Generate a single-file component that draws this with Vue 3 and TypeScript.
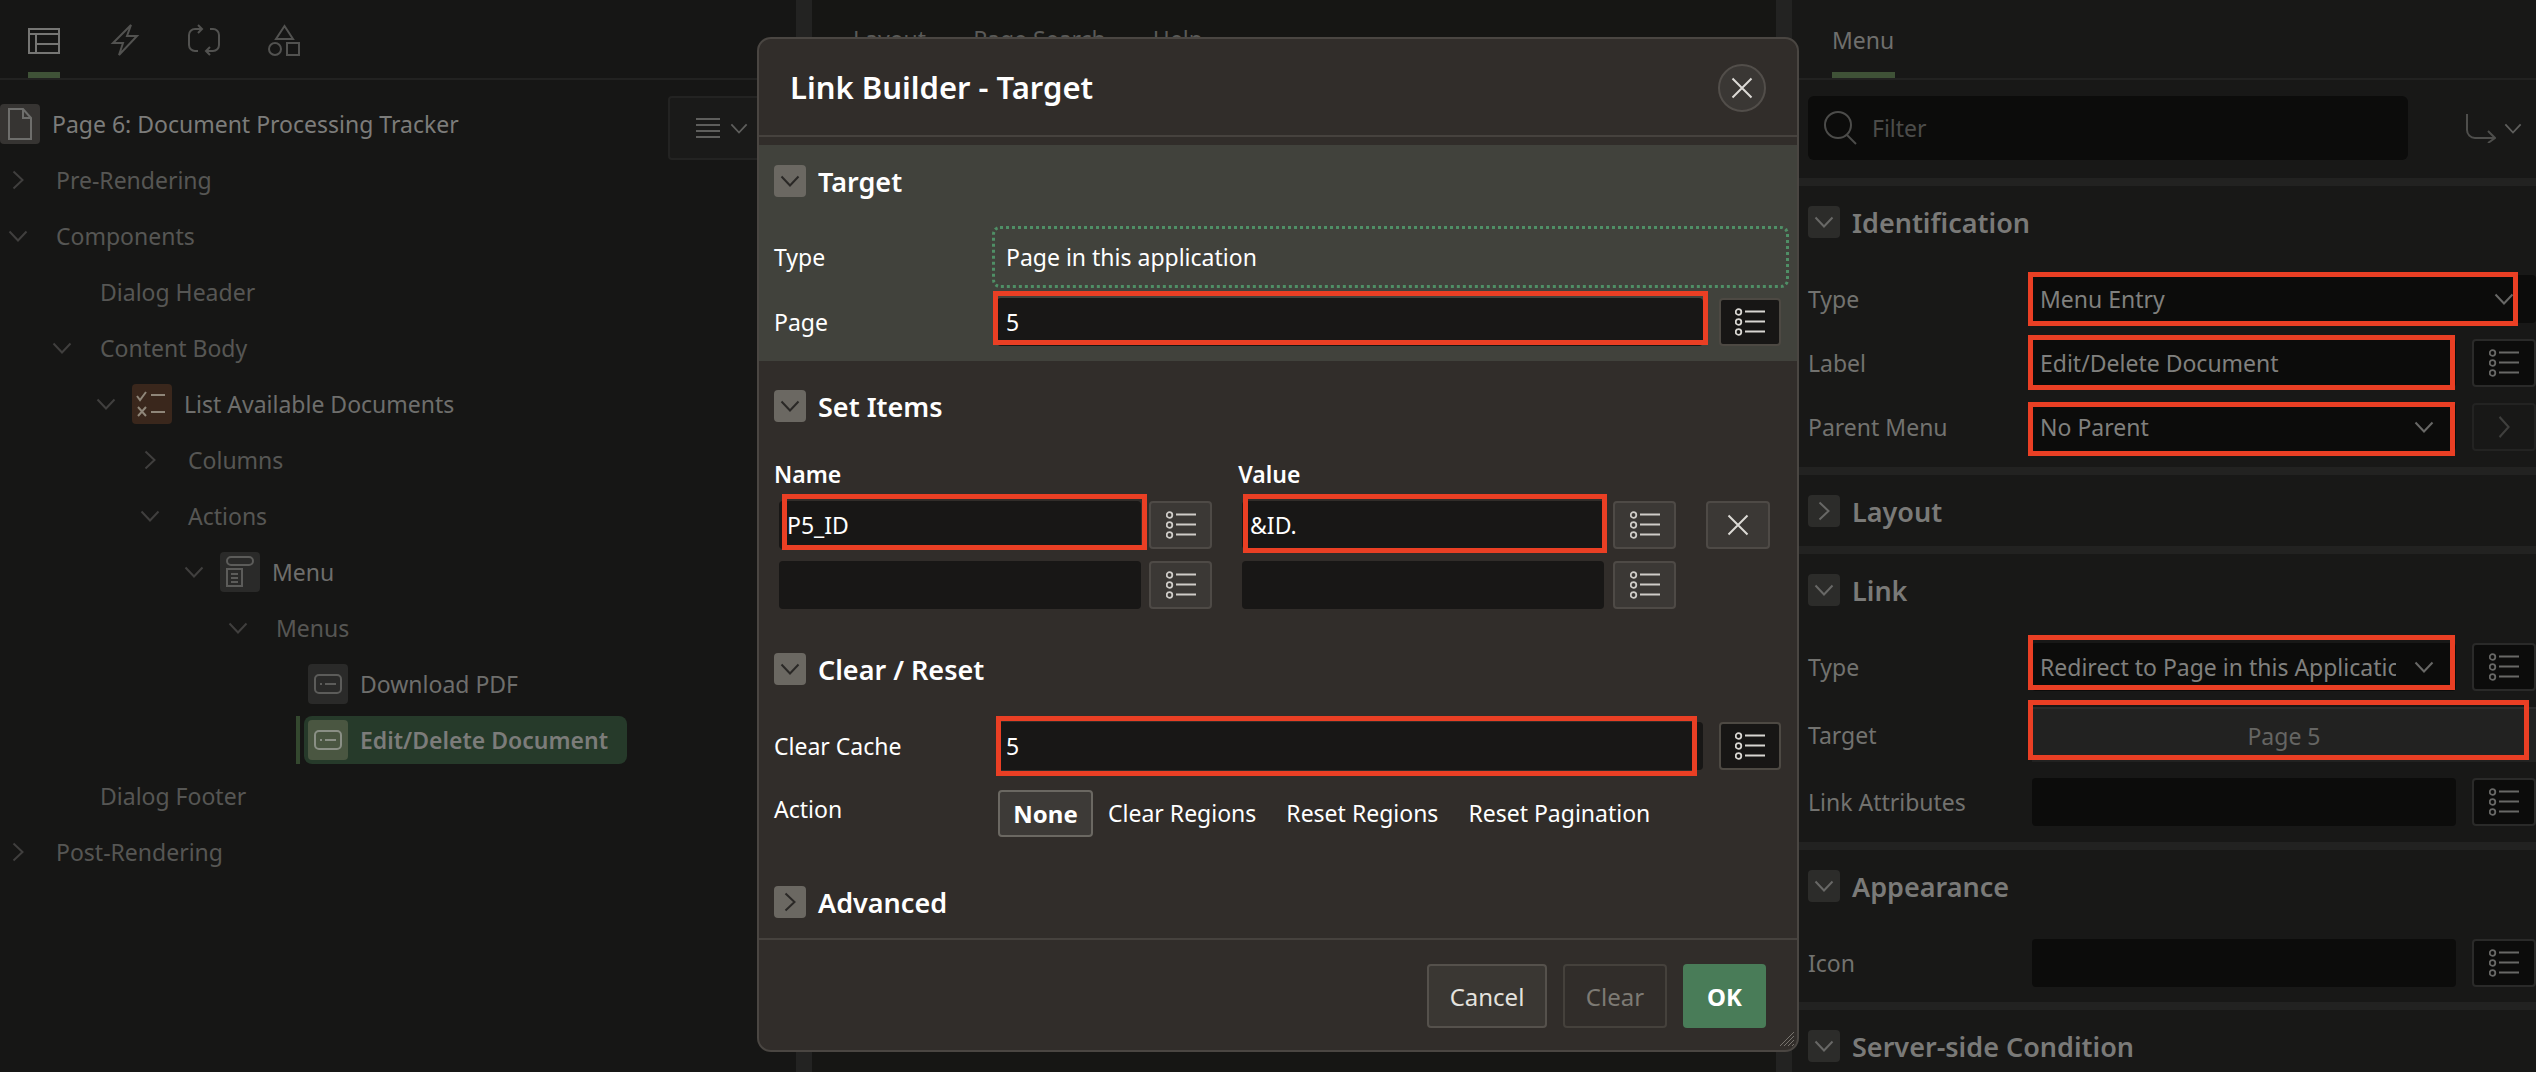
<script setup lang="ts">
interface TreeNode {
    label: string
    depth: number
    chev?: 'down' | 'right'
    icon?: 'list' | 'menu' | 'entry'
    selected?: boolean
}

const tree: TreeNode[] = [
    { label: 'Pre-Rendering', depth: 0, chev: 'right' },
    { label: 'Components', depth: 0, chev: 'down' },
    { label: 'Dialog Header', depth: 1 },
    { label: 'Content Body', depth: 1, chev: 'down' },
    { label: 'List Available Documents', depth: 2, chev: 'down', icon: 'list' },
    { label: 'Columns', depth: 3, chev: 'right' },
    { label: 'Actions', depth: 3, chev: 'down' },
    { label: 'Menu', depth: 4, chev: 'down', icon: 'menu' },
    { label: 'Menus', depth: 5, chev: 'down' },
    { label: 'Download PDF', depth: 6, icon: 'entry' },
    { label: 'Edit/Delete Document', depth: 6, icon: 'entry', selected: true },
    { label: 'Dialog Footer', depth: 1 },
    { label: 'Post-Rendering', depth: 0, chev: 'right' },
]

const actions = ['Clear Regions', 'Reset Regions', 'Reset Pagination']
</script>

<template>
    <div class="page">
        <svg class="sprite" aria-hidden="true">
            <symbol id="chev-d" viewBox="0 0 20 12"><path d="M1.5 1.5 10 10.5l8.5-9" fill="none" stroke="currentColor" stroke-width="2" /></symbol>
            <symbol id="chev-r" viewBox="0 0 12 20"><path d="M1.5 1.5 10.5 10l-9 8.5" fill="none" stroke="currentColor" stroke-width="2" /></symbol>
            <symbol id="lov" viewBox="0 0 30 28">
                <g fill="none" stroke="currentColor" stroke-width="1.800">
                    <circle cx="3.500" cy="4" r="2.800" /><circle cx="3.500" cy="14" r="2.800" /><circle cx="3.500" cy="24" r="2.800" />
                    <path d="M10 3.500h20M10 13.500h20M10 23.500h20" />
                </g>
            </symbol>
            <symbol id="cross" viewBox="0 0 22 22"><path d="M1.500 1.500l19 19m0-19l-19 19" fill="none" stroke="currentColor" stroke-width="2" /></symbol>
        </svg>

        <aside class="left">
            <div class="tabs">
                <div class="tab tab-on">
                    <svg width="32" height="32" viewBox="0 0 32 32" fill="none" stroke="currentColor" stroke-width="2"><path d="M1 5h30v24H1zM1 10h30M8 10v19M8 20h23" /></svg>
                </div>
                <div class="tab">
                    <svg width="32" height="32" viewBox="0 0 32 32" fill="none" stroke="currentColor" stroke-width="2"><path d="M23 1 5 19h10l-4 12 18-19H19z" /></svg>
                </div>
                <div class="tab">
                    <svg width="32" height="32" viewBox="0 0 32 32" fill="none" stroke="currentColor" stroke-width="2"><path d="M13 5H7a6 6 0 0 0-6 6v10a6 6 0 0 0 6 6h3M10 1l4 4-4 4M19 27h6a6 6 0 0 0 6-6V11a6 6 0 0 0-6-6h-3M22 23l-4 4 4 4" /></svg>
                </div>
                <div class="tab">
                    <svg width="32" height="32" viewBox="0 0 32 32" fill="none" stroke="currentColor" stroke-width="2"><path d="M16.500 2 25 15H8zM19 19h12v12H19z" /><circle cx="7" cy="25" r="6" /></svg>
                </div>
            </div>

            <div class="tree">
                <div class="root-row">
                    <span class="node-icon page-icon">
                        <svg width="26" height="32" viewBox="0 0 26 32" fill="none" stroke="currentColor" stroke-width="2"><path d="M2 1h14l8 9v21H2zM16 1v9h8" /></svg>
                    </span>
                    <span class="root-label">Page 6: Document Processing Tracker</span>
                    <div class="tree-menu">
                        <svg width="24" height="20" viewBox="0 0 24 20" fill="none" stroke="currentColor" stroke-width="2"><path d="M0 1h24M0 7h24M0 13h24M0 19h24" /></svg>
                        <svg class="tree-menu-chev" width="18" height="11"><use href="#chev-d" /></svg>
                    </div>
                </div>

                <div
                    v-for="n in tree"
                    :key="n.label"
                    class="row"
                    :class="{ 'row-sel': n.selected }"
                    :style="{ paddingLeft: n.depth * 44 + 'px' }"
                >
                    <span class="chev-cell">
                        <svg v-if="n.chev === 'down'" width="20" height="12"><use href="#chev-d" /></svg>
                        <svg v-else-if="n.chev === 'right'" class="chev-r" width="12" height="20"><use href="#chev-r" /></svg>
                    </span>
                    <span v-if="n.selected" class="sel-bar"></span>
                    <span v-if="n.icon" class="node-icon" :class="'icon-' + n.icon">
                        <svg v-if="n.icon === 'list'" width="32" height="32" viewBox="0 0 32 32" fill="none" stroke="currentColor" stroke-width="2">
                            <path d="M1 8l3 4 6-8M15 7h14M2 19l8 9m0-9-8 9M15 24h14" />
                        </svg>
                        <svg v-else-if="n.icon === 'menu'" width="28" height="32" viewBox="0 0 28 32" fill="none" stroke="currentColor" stroke-width="2">
                            <rect x="1" y="1" width="26" height="8" rx="4" /><path d="M1 13h15v17H1zM5 18h7M5 22h7M5 26h7" />
                        </svg>
                        <svg v-else width="28" height="20" viewBox="0 0 28 20" fill="none" stroke="currentColor" stroke-width="2">
                            <rect x="1" y="1" width="26" height="18" rx="4" /><path d="M6 10h2M11 10h11" />
                        </svg>
                    </span>
                    <span class="row-label" :class="{ 'label-bright': n.icon === 'list' || n.icon === 'menu' || n.icon === 'entry' }">{{ n.label }}</span>
                </div>
            </div>
        </aside>

        <div class="strip"></div>

        <main class="center">
            <div class="center-tabs">
                <span>Layout</span>
                <span>Page Search</span>
                <span>Help</span>
            </div>
        </main>

        <div class="strip"></div>

        <aside class="right">
            <div class="right-tabs"><span class="right-tab">Menu</span></div>

            <div class="filter-row">
                <div class="filter">
                    <svg width="34" height="34" viewBox="0 0 34 34" fill="none" stroke="currentColor" stroke-width="2"><circle cx="14" cy="14" r="13" /><path d="M23 24l9 9" /></svg>
                    <span>Filter</span>
                </div>
                <div class="filter-tools">
                    <svg width="30" height="30" viewBox="0 0 30 30" fill="none" stroke="currentColor" stroke-width="2"><path d="M1 1v16a8 8 0 0 0 8 8h20M22 18l7 7-7 5" /></svg>
                    <svg class="filter-chev" width="18" height="11"><use href="#chev-d" /></svg>
                </div>
            </div>

            <section class="pe-sec">
                <div class="pe-head">
                    <span class="pe-toggle"><svg width="20" height="12"><use href="#chev-d" /></svg></span>
                    <h3>Identification</h3>
                </div>
                <div class="pe-row">
                    <label>Type</label>
                    <div class="pe-input pe-wide">
                        Menu Entry
                        <svg class="sel-chev sel-chev-wide" width="20" height="12"><use href="#chev-d" /></svg>
                        <i class="mark m-type"></i>
                    </div>
                </div>
                <div class="pe-row">
                    <label>Label</label>
                    <div class="pe-input">Edit/Delete Document<i class="mark m-label"></i></div>
                    <button class="pe-btn"><svg width="30" height="28"><use href="#lov" /></svg></button>
                </div>
                <div class="pe-row">
                    <label>Parent Menu</label>
                    <div class="pe-input">
                        No Parent
                        <svg class="sel-chev" width="20" height="12"><use href="#chev-d" /></svg>
                        <i class="mark m-parent"></i>
                    </div>
                    <button class="pe-btn pe-btn-off"><svg width="12" height="24" viewBox="0 0 12 20" preserveAspectRatio="none"><use href="#chev-r" /></svg></button>
                </div>
            </section>

            <section class="pe-sec pe-closed">
                <div class="pe-head">
                    <span class="pe-toggle"><svg width="12" height="20"><use href="#chev-r" /></svg></span>
                    <h3>Layout</h3>
                </div>
            </section>

            <section class="pe-sec">
                <div class="pe-head">
                    <span class="pe-toggle"><svg width="20" height="12"><use href="#chev-d" /></svg></span>
                    <h3>Link</h3>
                </div>
                <div class="pe-row">
                    <label>Type</label>
                    <div class="pe-input">
                        <span class="clip-text">Redirect to Page in this Application</span>
                        <svg class="sel-chev" width="20" height="12"><use href="#chev-d" /></svg>
                        <i class="mark m-link"></i>
                    </div>
                    <button class="pe-btn"><svg width="30" height="28"><use href="#lov" /></svg></button>
                </div>
                <div class="pe-row pe-row-tall">
                    <label>Target</label>
                    <div class="pe-target">Page 5<i class="mark m-target"></i></div>
                </div>
                <div class="pe-row">
                    <label>Link Attributes</label>
                    <div class="pe-input"></div>
                    <button class="pe-btn"><svg width="30" height="28"><use href="#lov" /></svg></button>
                </div>
            </section>

            <section class="pe-sec pe-sec-short">
                <div class="pe-head">
                    <span class="pe-toggle"><svg width="20" height="12"><use href="#chev-d" /></svg></span>
                    <h3>Appearance</h3>
                </div>
                <div class="pe-row">
                    <label>Icon</label>
                    <div class="pe-input"></div>
                    <button class="pe-btn"><svg width="30" height="28"><use href="#lov" /></svg></button>
                </div>
            </section>

            <section class="pe-sec">
                <div class="pe-head">
                    <span class="pe-toggle"><svg width="20" height="12"><use href="#chev-d" /></svg></span>
                    <h3>Server-side Condition</h3>
                </div>
            </section>
        </aside>

        <div class="dialog">
            <header class="dlg-head">
                <h2>Link Builder - Target</h2>
                <button class="dlg-close"><svg width="22" height="22"><use href="#cross" /></svg></button>
            </header>

            <section class="dlg-sec dlg-sec-on">
                <div class="dlg-sec-head">
                    <span class="dlg-toggle"><svg width="20" height="12"><use href="#chev-d" /></svg></span>
                    <h3>Target</h3>
                </div>
                <div class="dlg-row dlg-row-type">
                    <label>Type</label>
                    <div class="dotted">Page in this application</div>
                </div>
                <div class="dlg-row">
                    <label>Page</label>
                    <div class="dlg-input">5<i class="mark m-page"></i></div>
                    <button class="lov-dark"><svg width="30" height="28"><use href="#lov" /></svg></button>
                </div>
            </section>

            <section class="dlg-sec dlg-sec-items">
                <div class="dlg-sec-head">
                    <span class="dlg-toggle"><svg width="20" height="12"><use href="#chev-d" /></svg></span>
                    <h3>Set Items</h3>
                </div>
                <div class="item-labels">
                    <b>Name</b>
                    <b class="item-value-label">Value</b>
                </div>
                <div class="item-row">
                    <div class="item-input">P5_ID<i class="mark m-name"></i></div>
                    <button class="lov-btn"><svg width="30" height="28"><use href="#lov" /></svg></button>
                    <div class="item-input item-input-2">&amp;ID.<i class="mark m-value"></i></div>
                    <button class="lov-btn lov-btn-2"><svg width="30" height="28"><use href="#lov" /></svg></button>
                    <button class="del-btn"><svg width="22" height="22"><use href="#cross" /></svg></button>
                </div>
                <div class="item-row">
                    <div class="item-input"></div>
                    <button class="lov-btn"><svg width="30" height="28"><use href="#lov" /></svg></button>
                    <div class="item-input item-input-2"></div>
                    <button class="lov-btn lov-btn-2"><svg width="30" height="28"><use href="#lov" /></svg></button>
                </div>
            </section>

            <section class="dlg-sec dlg-sec-clear">
                <div class="dlg-sec-head">
                    <span class="dlg-toggle"><svg width="20" height="12"><use href="#chev-d" /></svg></span>
                    <h3>Clear / Reset</h3>
                </div>
                <div class="dlg-row dlg-row-cache">
                    <label>Clear Cache</label>
                    <div class="dlg-input">5<i class="mark m-cache"></i></div>
                    <button class="lov-dark"><svg width="30" height="28"><use href="#lov" /></svg></button>
                </div>
                <div class="dlg-row dlg-row-action">
                    <label class="action-label">Action</label>
                    <span class="pill-on">None</span>
                    <span v-for="a in actions" :key="a" class="pill">{{ a }}</span>
                </div>
            </section>

            <section class="dlg-sec dlg-sec-adv">
                <div class="dlg-sec-head">
                    <span class="dlg-toggle"><svg width="12" height="20"><use href="#chev-r" /></svg></span>
                    <h3>Advanced</h3>
                </div>
            </section>

            <footer class="dlg-foot">
                <button class="btn btn-cancel">Cancel</button>
                <button class="btn btn-clear">Clear</button>
                <button class="btn btn-ok">OK</button>
            </footer>

            <svg class="grip" width="16" height="16" viewBox="0 0 16 16" stroke="#77736d" stroke-width="1"><path d="M15 1 1 15M15 5 5 15M15 9l-6 6M15 13l-2 2" /></svg>
        </div>
    </div>
</template>

<style scoped>
.page {
    position: relative;
    display: flex;
    width: 2536px;
    height: 1072px;
    overflow: hidden;
    background: #161615;
    font-family: "Noto Sans", sans-serif;
    font-size: 23px;
    color: #5c5c5a;
}
.sprite { position: absolute; width: 0; height: 0; }
button { font-family: inherit; padding: 0; }
h2, h3 { margin: 0; }
svg { display: block; flex-shrink: 0; }

/* left tree */
.left { width: 796px; flex-shrink: 0; }
.tabs { display: flex; gap: 48px; height: 80px; padding-left: 28px; border-bottom: 2px solid #222221; box-sizing: border-box; }
.tab { height: 78px; box-sizing: border-box; padding-top: 24px; color: #525250; }
.tab-on { color: #767674; border-bottom: 6px solid #3f5237; }

.tree { padding-top: 24px; }
.root-row { display: flex; align-items: center; height: 40px; margin-bottom: 16px; gap: 12px; position: relative; }
.root-label { color: #7c7c7a; }
.tree-menu {
    position: absolute;
    left: 668px;
    top: -8px;
    width: 128px;
    height: 64px;
    box-sizing: border-box;
    display: flex;
    align-items: center;
    padding-left: 26px;
    gap: 10px;
    background: #1a1a19;
    border: 2px solid #232322;
    border-radius: 4px;
    color: #5e5e5c;
}
.node-icon { width: 40px; height: 40px; border-radius: 4px; display: flex; align-items: center; justify-content: center; flex-shrink: 0; margin-right: 12px; }
.root-row .node-icon { margin-right: 0; }
.page-icon { background: #363432; color: #6e6e6c; }
.icon-list { background: #3a271c; color: #8f8679; }
.icon-menu { background: #2a2a29; color: #5c5c5a; }
.icon-entry { background: #2a2a29; color: #5c5c5a; }

.row { display: flex; align-items: center; height: 40px; margin-bottom: 16px; position: relative; color: #565654; }
.chev-cell { width: 44px; height: 40px; display: flex; align-items: center; padding-left: 8px; box-sizing: border-box; flex-shrink: 0; color: #403f3e; }
.chev-r { margin-left: 4px; }
.row-label { margin-left: 12px; }
.node-icon + .row-label { margin-left: 0; }
.label-bright { color: #6e6e6c; }
.row-sel .row-label { color: #7c7c7a; font-weight: 600; position: relative; }
.row-sel .node-icon { background: #4a5641; color: #8a8f85; position: relative; }
.row-sel::before {
    content: "";
    position: absolute;
    left: 304px;
    top: -4px;
    width: 323px;
    height: 48px;
    border-radius: 8px;
    background: #263a2a;
}
.sel-bar { position: absolute; left: 296px; top: -4px; width: 4px; height: 48px; background: #34482f; }

.strip { width: 16px; flex-shrink: 0; background: #232322; }

/* center */
.center { width: 964px; flex-shrink: 0; background: #161614; }
.center-tabs { display: flex; gap: 47px; padding: 23px 0 0 41px; color: #5a5a58; }

/* right: property editor */
.right { width: 744px; flex-shrink: 0; background: #181817; overflow: hidden; }
.right-tabs { height: 80px; box-sizing: border-box; border-bottom: 2px solid #222221; padding-left: 40px; }
.right-tab { display: block; width: 63px; height: 78px; line-height: 80px; box-sizing: border-box; border-bottom: 6px solid #3f5237; color: #6f6f6d; }
.filter-row { display: flex; align-items: center; padding: 16px 0 18px 16px; }
.filter { display: flex; align-items: center; gap: 14px; width: 600px; height: 64px; box-sizing: border-box; padding-left: 16px; background: #0c0c0b; border-radius: 6px; color: #4c4c4a; }
.filter-tools { display: flex; align-items: center; margin-left: 58px; gap: 8px; color: #4e4e4c; }
.filter-chev { color: #5e5e5c; }

.pe-sec { border-top: 8px solid #222221; padding: 20px 0 16px 16px; }
.pe-closed { padding-bottom: 19px; }
.pe-sec-short { padding-bottom: 15px; }
.pe-head { display: flex; align-items: center; gap: 12px; height: 32px; }
.pe-head + .pe-row { margin-top: 37px; }
.pe-head h3 { font-size: 27px; font-weight: 600; color: #7a7a78; }
.pe-toggle { width: 32px; height: 32px; border-radius: 4px; background: #2c2c2a; color: #686866; display: flex; align-items: center; justify-content: center; }

.pe-row { display: flex; align-items: center; height: 48px; margin-bottom: 16px; color: #72726f; }
.pe-row:last-child { margin-bottom: 0; }
.pe-row-tall { height: 55px; }
.pe-row label { width: 224px; flex-shrink: 0; }
.pe-input {
    position: relative;
    display: flex;
    align-items: center;
    width: 424px;
    height: 48px;
    box-sizing: border-box;
    padding-left: 8px;
    background: #0c0c0b;
    border-radius: 4px;
    color: #80807e;
    flex-shrink: 0;
}
.pe-wide { width: 504px; }
.clip-text { width: 356px; overflow: hidden; white-space: nowrap; }
.sel-chev { position: absolute; right: 22px; top: 18px; color: #686866; }
.sel-chev-wide { right: 22px; }
.pe-btn { width: 64px; height: 48px; margin-left: 16px; background: #0c0c0b; border: 2px solid #2a2a29; border-radius: 4px; color: #686866; display: flex; align-items: center; justify-content: center; flex-shrink: 0; box-sizing: border-box; }
.pe-btn-off { background: transparent; border-color: #232322; color: #3f3f3d; }
.pe-target { position: relative; width: 504px; height: 55px; box-sizing: border-box; background: #222221; border-top: 2px solid #2c2c2b; display: flex; align-items: center; justify-content: center; color: #656563; }

.mark { position: absolute; border: 5px solid #ea3f24; box-sizing: border-box; pointer-events: none; }
.m-type { left: -4px; right: 18px; top: -3px; bottom: -3px; }
.m-label { left: -4px; right: 1px; top: -4px; bottom: -3px; }
.m-parent { left: -4px; right: 1px; top: -1px; bottom: -5px; }
.m-link { left: -4px; right: 1px; top: -8px; bottom: 1px; }
.m-target { left: -4px; right: 7px; top: -9px; bottom: 2px; }
.m-page { left: -4px; right: -5px; top: -7px; bottom: 1px; }
.m-cache { left: -1px; right: 6px; top: -6px; bottom: -6px; }
.m-name { left: 3px; right: -6px; top: -7px; bottom: -1px; }
.m-value { left: 1px; right: -3px; top: -7px; bottom: -4px; }

/* dialog */
.dialog {
    position: absolute;
    left: 757px;
    top: 37px;
    width: 1042px;
    height: 1015px;
    box-sizing: border-box;
    background: #312d2a;
    border: 2px solid #4a4642;
    border-radius: 14px;
    color: #fff;
}
.dlg-head { display: flex; align-items: center; justify-content: space-between; height: 96px; padding: 0 31px 0 31px; border-bottom: 2px solid #46423e; margin-bottom: 8px; box-sizing: content-box; }
.dlg-head h2 { font-size: 31px; font-weight: 600; }
.dlg-close { width: 48px; height: 48px; border-radius: 50%; background: #3a3734; border: 2px solid #524e4a; color: #dcdad6; display: flex; align-items: center; justify-content: center; box-sizing: border-box; margin-top: 2px; }

.dlg-sec { padding: 20px 0 15px 15px; }
.dlg-sec-on { background: #41423c; }
.dlg-sec-items { padding-top: 29px; }
.dlg-sec-clear { padding-top: 29px; padding-bottom: 20px; }
.dlg-sec-adv { padding-top: 29px; padding-bottom: 20px; }
.dlg-sec-head { display: flex; align-items: center; gap: 12px; height: 32px; }
.dlg-sec-head h3 { font-size: 27px; font-weight: 600; }
.dlg-toggle { width: 32px; height: 32px; border-radius: 4px; background: #6b6862; color: #2a2826; display: flex; align-items: center; justify-content: center; }

.dlg-row { display: flex; align-items: center; height: 48px; }
.dlg-row label { width: 223px; flex-shrink: 0; }
.dlg-row-type { height: 62px; margin-top: 29px; margin-bottom: 10px; }
.dotted { width: 797px; height: 62px; margin-left: -5px; box-sizing: border-box; border: 3px dotted #4f8f66; border-radius: 8px; padding-left: 11px; display: flex; align-items: center; }
.dlg-input { position: relative; width: 706px; height: 48px; box-sizing: border-box; padding-left: 9px; background: #181716; border-radius: 4px; display: flex; align-items: center; flex-shrink: 0; }
.lov-dark { width: 62px; height: 48px; margin-left: 16px; background: #171615; border: 2px solid #4d4943; border-radius: 4px; color: #d8d6d2; display: flex; align-items: center; justify-content: center; box-sizing: border-box; }

.item-labels { display: flex; margin-top: 36px; height: 32px; align-items: center; }
.item-labels b { font-weight: 600; font-size: 23px; }
.item-value-label { margin-left: 397px; }
.item-row { display: flex; align-items: center; height: 48px; margin-top: 12px; padding-left: 5px; }
.item-labels + .item-row { margin-top: 11px; }
.item-input { position: relative; width: 362px; height: 48px; box-sizing: border-box; padding-left: 8px; background: #181716; border-radius: 4px; display: flex; align-items: center; flex-shrink: 0; }
.item-input-2 { margin-left: 30px; }
.lov-btn { width: 63px; height: 48px; margin-left: 8px; background: #3b3835; border: 2px solid #4e4a46; border-radius: 4px; color: #cfccc8; display: flex; align-items: center; justify-content: center; box-sizing: border-box; }
.lov-btn-2 { margin-left: 9px; }
.del-btn { width: 64px; height: 48px; margin-left: 30px; background: #3b3835; border: 2px solid #4e4a46; border-radius: 4px; color: #dcdad6; display: flex; align-items: center; justify-content: center; box-sizing: border-box; }

.dlg-row-cache { margin-top: 37px; }
.dlg-row-action { margin-top: 19px; }
.action-label { position: relative; top: -4px; }
.pill-on { width: 95px; height: 47px; margin-left: 1px; box-sizing: border-box; background: #3d3a37; border: 2px solid #6b6862; border-radius: 4px; font-weight: 700; font-size: 24px; display: flex; align-items: center; justify-content: center; }
.pill { padding: 0 15px; }

.dlg-foot { display: flex; justify-content: flex-end; gap: 16px; padding: 24px 31px 0 0; border-top: 2px solid #46423e; }
.btn { height: 64px; box-sizing: border-box; border-radius: 4px; font-size: 24px; }
.btn-cancel { width: 120px; background: #3a3733; border: 2px solid #55514c; color: #e4e2de; }
.btn-clear { width: 104px; background: #312d2a; border: 2px solid #45413c; color: #7d7a74; }
.btn-ok { width: 83px; background: #497c58; border: none; color: #fff; font-weight: 700; }
.grip { position: absolute; right: 2px; bottom: 3px; }
</style>

<style>
html, body { margin: 0; background: #161615; }
</style>
